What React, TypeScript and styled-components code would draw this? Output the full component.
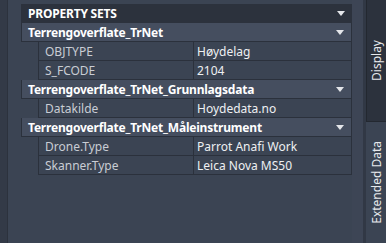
import React from "react";
import styled, { createGlobalStyle } from "styled-components";

const Global = createGlobalStyle`
  html, body { margin: 0; padding: 0; background: #3b4453; }
  body { width: 386px; height: 243px; overflow: hidden; font-family: "Noto Sans", "Open Sans", sans-serif; }
  #root { height: 243px; }
`;

const Page = styled.div`
  display: flex;
  width: 386px;
  height: 243px;
  background: #3b4453;
`;

const LeftRail = styled.div`
  width: 7px;
  background: #333a47;
  border-right: 1px solid #2c323d;
  flex: none;
`;

const Main = styled.div`
  width: 331px;
  margin-left: 13px;
  padding-top: 4px;
  display: flex;
  flex-direction: column;
  flex: none;
`;

const Gutter = styled.div`
  width: 11px;
  flex: none;
  background: #3d4555;
  border-right: 3px solid #313845;
`;

const TabRail = styled.div`
  width: 20px;
  flex: none;
  display: flex;
  flex-direction: column;
`;

const Tab = styled.div<{ $active?: boolean; $h?: number }>`
  height: ${(p) => (p.$h ? `${p.$h}px` : "auto")};
  flex: ${(p) => (p.$h ? "none" : "1")};
  background: ${(p) => (p.$active ? "#2c323d" : "#3b4453")};
  border-left: 1px solid ${(p) => (p.$active ? "#232830" : "#3b4453")};
  border-bottom: 1px solid ${(p) => (p.$active ? "#232830" : "transparent")};
  display: flex;
  align-items: center;
  justify-content: center;
  box-sizing: border-box;
`;

const TabLabel = styled.span`
  writing-mode: vertical-rl;
  transform: rotate(180deg);
  color: #e6e8eb;
  font-size: 12px;
  line-height: 18px;
  white-space: nowrap;
`;

const Caret = styled.span`
  margin-left: auto;
  width: 0;
  height: 0;
  border-left: 4.5px solid transparent;
  border-right: 4.5px solid transparent;
  border-top: 5px solid #e4e6ea;
  margin-right: 7px;
`;

const SectionHeader = styled.div`
  height: 19px;
  box-sizing: border-box;
  display: flex;
  align-items: center;
  padding-left: 7px;
  background: #2c323d;
  color: #ffffff;
  font-weight: 700;
  font-size: 12px;
  letter-spacing: -0.2px;
`;

const GroupHeader = styled.div`
  height: 19px;
  box-sizing: border-box;
  display: flex;
  align-items: center;
  padding-left: 6px;
  background: #454e5f;
  border: 1px solid #2b313c;
  border-top: none;
  color: #ffffff;
  font-weight: 700;
  font-size: 12px;
  letter-spacing: -0.2px;
`;

const Row = styled.div`
  height: 19px;
  margin-left: 17px;
  display: grid;
  grid-template-columns: 155px 1fr;
  box-sizing: border-box;
  border-bottom: 1px solid #2b313c;
  font-size: 12px;
`;

const Cell = styled.div<{ $value?: boolean }>`
  display: flex;
  align-items: center;
  padding-left: ${(p) => (p.$value ? "3px" : "6px")};
  border-left: 1px solid #2b313c;
  border-right: ${(p) => (p.$value ? "1px solid #2b313c" : "none")};
  color: ${(p) => (p.$value ? "#eef0f2" : "#c9cdd4")};
  white-space: nowrap;
  overflow: hidden;
`;

const groups = [
  {
    name: "Terrengoverflate_TrNet",
    rows: [
      ["OBJTYPE", "Høydelag"],
      ["S_FCODE", "2104"],
    ],
  },
  {
    name: "Terrengoverflate_TrNet_Grunnlagsdata",
    rows: [["Datakilde", "Hoydedata.no"]],
  },
  {
    name: "Terrengoverflate_TrNet_Måleinstrument",
    rows: [
      ["Drone.Type", "Parrot Anafi Work"],
      ["Skanner.Type", "Leica Nova MS50"],
    ],
  },
];

export default function App() {
  return (
    <Page>
      <Global />
      <LeftRail />
      <Main>
        <SectionHeader>
          PROPERTY SETS
          <Caret />
        </SectionHeader>
        {groups.map((g) => (
          <React.Fragment key={g.name}>
            <GroupHeader>
              {g.name}
              <Caret />
            </GroupHeader>
            {g.rows.map(([k, v]) => (
              <Row key={k}>
                <Cell>{k}</Cell>
                <Cell $value>{v}</Cell>
              </Row>
            ))}
          </React.Fragment>
        ))}
      </Main>
      <Gutter />
      <TabRail>
        <Tab $active $h={122}>
          <TabLabel>Display</TabLabel>
        </Tab>
        <Tab>
          <TabLabel>Extended Data</TabLabel>
        </Tab>
      </TabRail>
    </Page>
  );
}
